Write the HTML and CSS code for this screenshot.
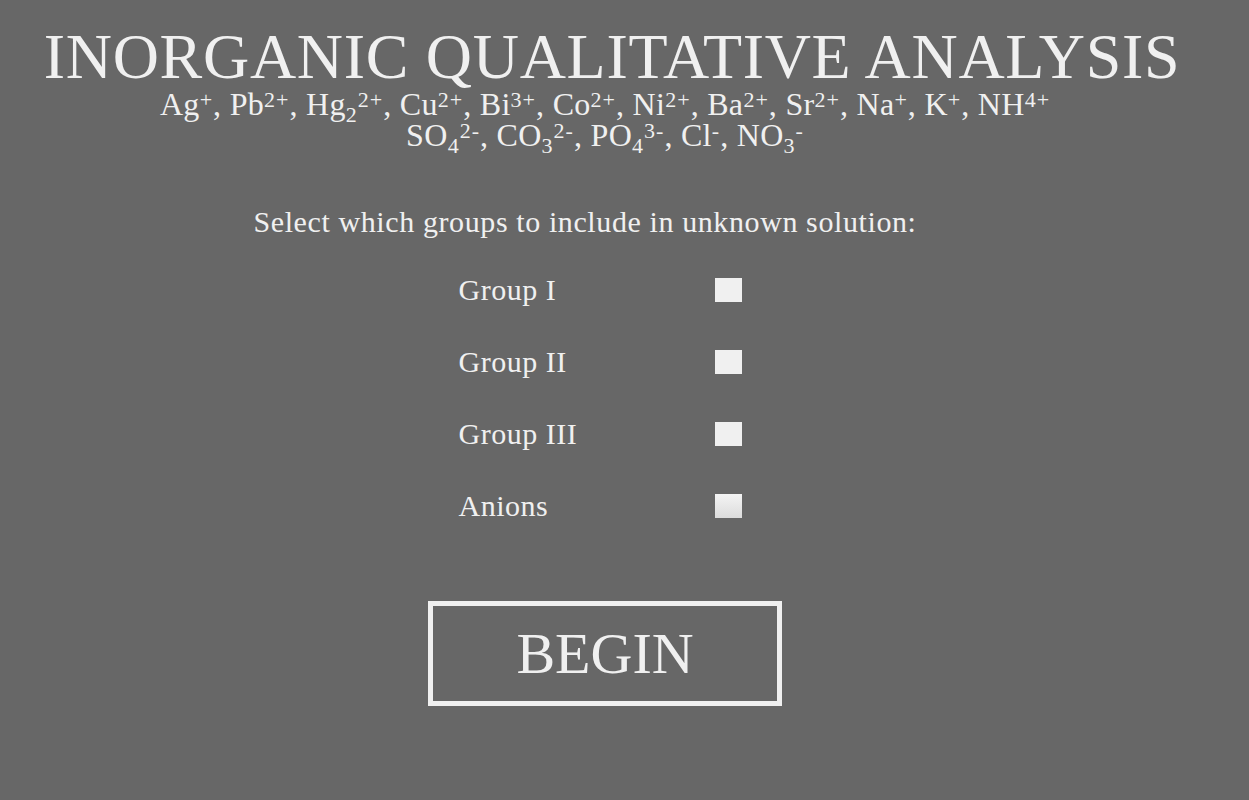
FILE: index.html
```html
<!DOCTYPE html>
<html>
<head>
<meta charset="utf-8">
<title>Inorganic Qualitative Analysis</title>
<link rel="stylesheet" href="styles.css">
</head>
<body>
<main class="page">
  <h1 class="title">INORGANIC QUALITATIVE ANALYSIS</h1>
  <p class="ions">Ag<sup>+</sup>, Pb<sup>2+</sup>, Hg<sub>2</sub><sup>2+</sup>, Cu<sup>2+</sup>, Bi<sup>3+</sup>, Co<sup>2+</sup>, Ni<sup>2+</sup>, Ba<sup>2+</sup>, Sr<sup>2+</sup>, Na<sup>+</sup>, K<sup>+</sup>, NH<sup>4+</sup><br>SO<sub>4</sub><sup>2-</sup>, CO<sub>3</sub><sup>2-</sup>, PO<sub>4</sub><sup>3-</sup>, Cl<sup>-</sup>, NO<sub>3</sub><sup>-</sup></p>
  <p class="prompt">Select which groups to include in unknown solution:</p>
  <div class="groups">
    <label class="group-label" for="g1">Group I</label><input class="check" type="checkbox" id="g1">
    <label class="group-label" for="g2">Group II</label><input class="check" type="checkbox" id="g2">
    <label class="group-label" for="g3">Group III</label><input class="check" type="checkbox" id="g3">
    <label class="group-label" for="g4">Anions</label><input class="check hover" type="checkbox" id="g4">
  </div>
  <button class="begin" type="button">BEGIN</button>
</main>
</body>
</html>
```
FILE: styles.css
```css
html, body {
  margin: 0;
  padding: 0;
  background: #676767;
  height: 100%;
}
body {
  font-family: "Liberation Serif", "DejaVu Serif", serif;
  color: #f0f0f0;
}
.page {
  width: 1210px;
  display: flex;
  flex-direction: column;
  align-items: center;
}
.title {
  margin: 28px 0 0;
  font-weight: normal;
  font-size: 64px;
  line-height: 58px;
  letter-spacing: 0.7px;
  white-space: nowrap;
  padding-left: 14px;
}
.ions {
  margin: 3px 0 0;
  font-size: 32px;
  line-height: 31px;
  letter-spacing: 0.3px;
  text-align: center;
  white-space: nowrap;
}
.ions sup, .ions sub {
  font-size: 22px;
  line-height: 0;
  letter-spacing: 1px;
}
.ions sup { vertical-align: 8px; }
.ions sub { vertical-align: -7px; }
.prompt {
  margin: 54px 0 0;
  font-size: 30px;
  line-height: 34px;
  letter-spacing: 0.6px;
  padding-right: 40px;
}
.groups {
  margin-top: 38px;
  display: grid;
  grid-template-columns: 256px 27px;
  row-gap: 47px;
  align-items: center;
  padding-right: 10px;
}
.group-label {
  font-size: 30px;
  line-height: 25px;
  letter-spacing: 0.5px;
}
.check {
  appearance: none;
  -webkit-appearance: none;
  margin: 0;
  width: 27px;
  height: 24px;
  background: #f0f0f0;
  border: none;
  border-radius: 0;
}
.check.hover {
  background: linear-gradient(#f4f4f4, #dcdcdc);
}
.begin {
  margin-top: 83px;
  width: 354px;
  height: 105px;
  background: transparent;
  border: 5px solid #f0f0f0;
  color: #f0f0f0;
  font-family: "Liberation Serif", "DejaVu Serif", serif;
  font-size: 58px;
  padding: 0;
  line-height: 1;
}
```
